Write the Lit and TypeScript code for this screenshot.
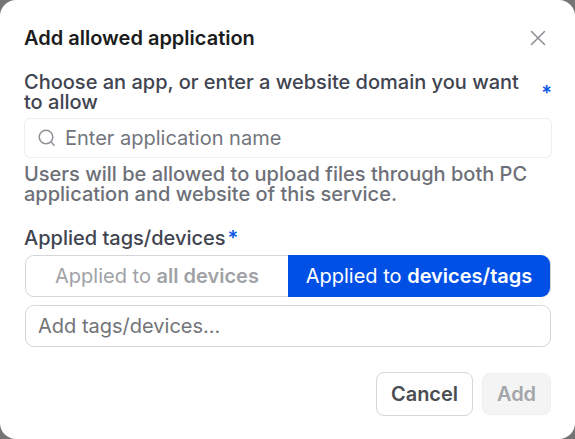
import { LitElement, html, css } from "lit";
import { customElement } from "lit/decorators.js";

@customElement("app-root")
export class AppRoot extends LitElement {
  static styles = css`
    :host { display: block; width: 575px; height: 439px; background: #757575; font-family: Inter, "Liberation Sans", sans-serif; overflow: hidden; }
    .modal { box-sizing: border-box; width: 575px; height: 439px; background: #fff; border-radius: 16px; padding: 26px 24px 0 24px; display: flex; flex-direction: column; }
    .head { display: flex; justify-content: space-between; align-items: center; height: 24px; padding-right: 3px; }
    h1 { margin: 0; font-size: 20px; line-height: 24px; font-weight: 600; color: #1a1c20; }
    .close { display: block; width: 20px; height: 20px; }
    .label { display: flex; align-items: center; margin-top: 22px; margin-right: -1px; font-size: 20px; line-height: 20px; font-weight: 500; color: #3f4450; }
    .label .txt { width: 518px; }
    .ast { color: #0b57e8; font-size: 20px; font-weight: 600; }
    .label .ast { flex: 1; text-align: right; margin-top: 1px; }
    .search { box-sizing: border-box; margin-top: 6px; height: 40px; width: 528px; border: 1px solid #eceef0; border-radius: 6px; display: flex; align-items: center; gap: 9px; padding-left: 13px; font-size: 20px; color: #72757c; }
    .hint { margin-top: 6px; font-size: 20px; line-height: 20px; color: #6d7078; font-weight: 500; }
    .tags { margin-top: 22px; font-size: 20px; line-height: 24px; font-weight: 500; color: #3f4450; display: flex; gap: 2px; }
    .seg { box-sizing: border-box; margin-top: 5px; margin-left: 1px; width: 526px; height: 42px; border: 1px solid #d4d6da; border-radius: 9px; display: grid; grid-template-columns: 262px 1fr; font-size: 20px; }
    .seg div { display: flex; align-items: center; justify-content: center; white-space: pre; }
    .off { color: #a0a2a6; }
    .on { background: #0050e6; color: #fff; margin: -1px 0; border-radius: 0 9px 9px 0; }
    b { font-weight: 600; }
    .input { box-sizing: border-box; margin-top: 8px; margin-left: 1px; width: 526px; height: 42px; border: 1px solid #d4d6da; border-radius: 9px; padding-left: 12px; display: flex; align-items: center; font-size: 20px; color: #727478; }
    .foot { margin-top: 25px; display: flex; justify-content: flex-end; align-items: center; gap: 9px; }
    .btn { box-sizing: border-box; border-radius: 8px; display: flex; align-items: center; justify-content: center; font-size: 20px; font-weight: 600; }
    .cancel { width: 97px; height: 44px; border: 1px solid #d4d6da; color: #4b4d52; background: #fff; }
    .add { width: 69px; height: 42px; background: #f4f4f5; color: #a3a5a9; border: 1px solid #efefef; }
  `;

  render() {
    return html`<div class="modal">
      <div class="head">
        <h1>Add allowed application</h1>
        <svg class="close" viewBox="0 0 20 20" fill="none" stroke="#8e9196" stroke-width="1.6" stroke-linecap="round"><path d="M3.5 3.5l13 13M16.5 3.5l-13 13"/></svg>
      </div>
      <div class="label"><span class="txt">Choose an app, or enter a website domain you want to allow</span><span class="ast">*</span></div>
      <div class="search">
        <svg width="18" height="18" viewBox="0 0 18 18" fill="none" stroke="#8e9196" stroke-width="1.5" stroke-linecap="round"><circle cx="8" cy="8" r="6.8"/><path d="M13 13l3.2 3.2"/></svg>
        <span>Enter application name</span>
      </div>
      <div class="hint">Users will be allowed to upload files through both PC application and website of this service.</div>
      <div class="tags"><span>Applied tags/devices</span><span class="ast">*</span></div>
      <div class="seg">
        <div class="off">Applied to <b>all devices</b></div>
        <div class="on">Applied to <b>devices/tags</b></div>
      </div>
      <div class="input">Add tags/devices...</div>
      <div class="foot">
        <div class="btn cancel">Cancel</div>
        <div class="btn add">Add</div>
      </div>
    </div>`;
  }
}
